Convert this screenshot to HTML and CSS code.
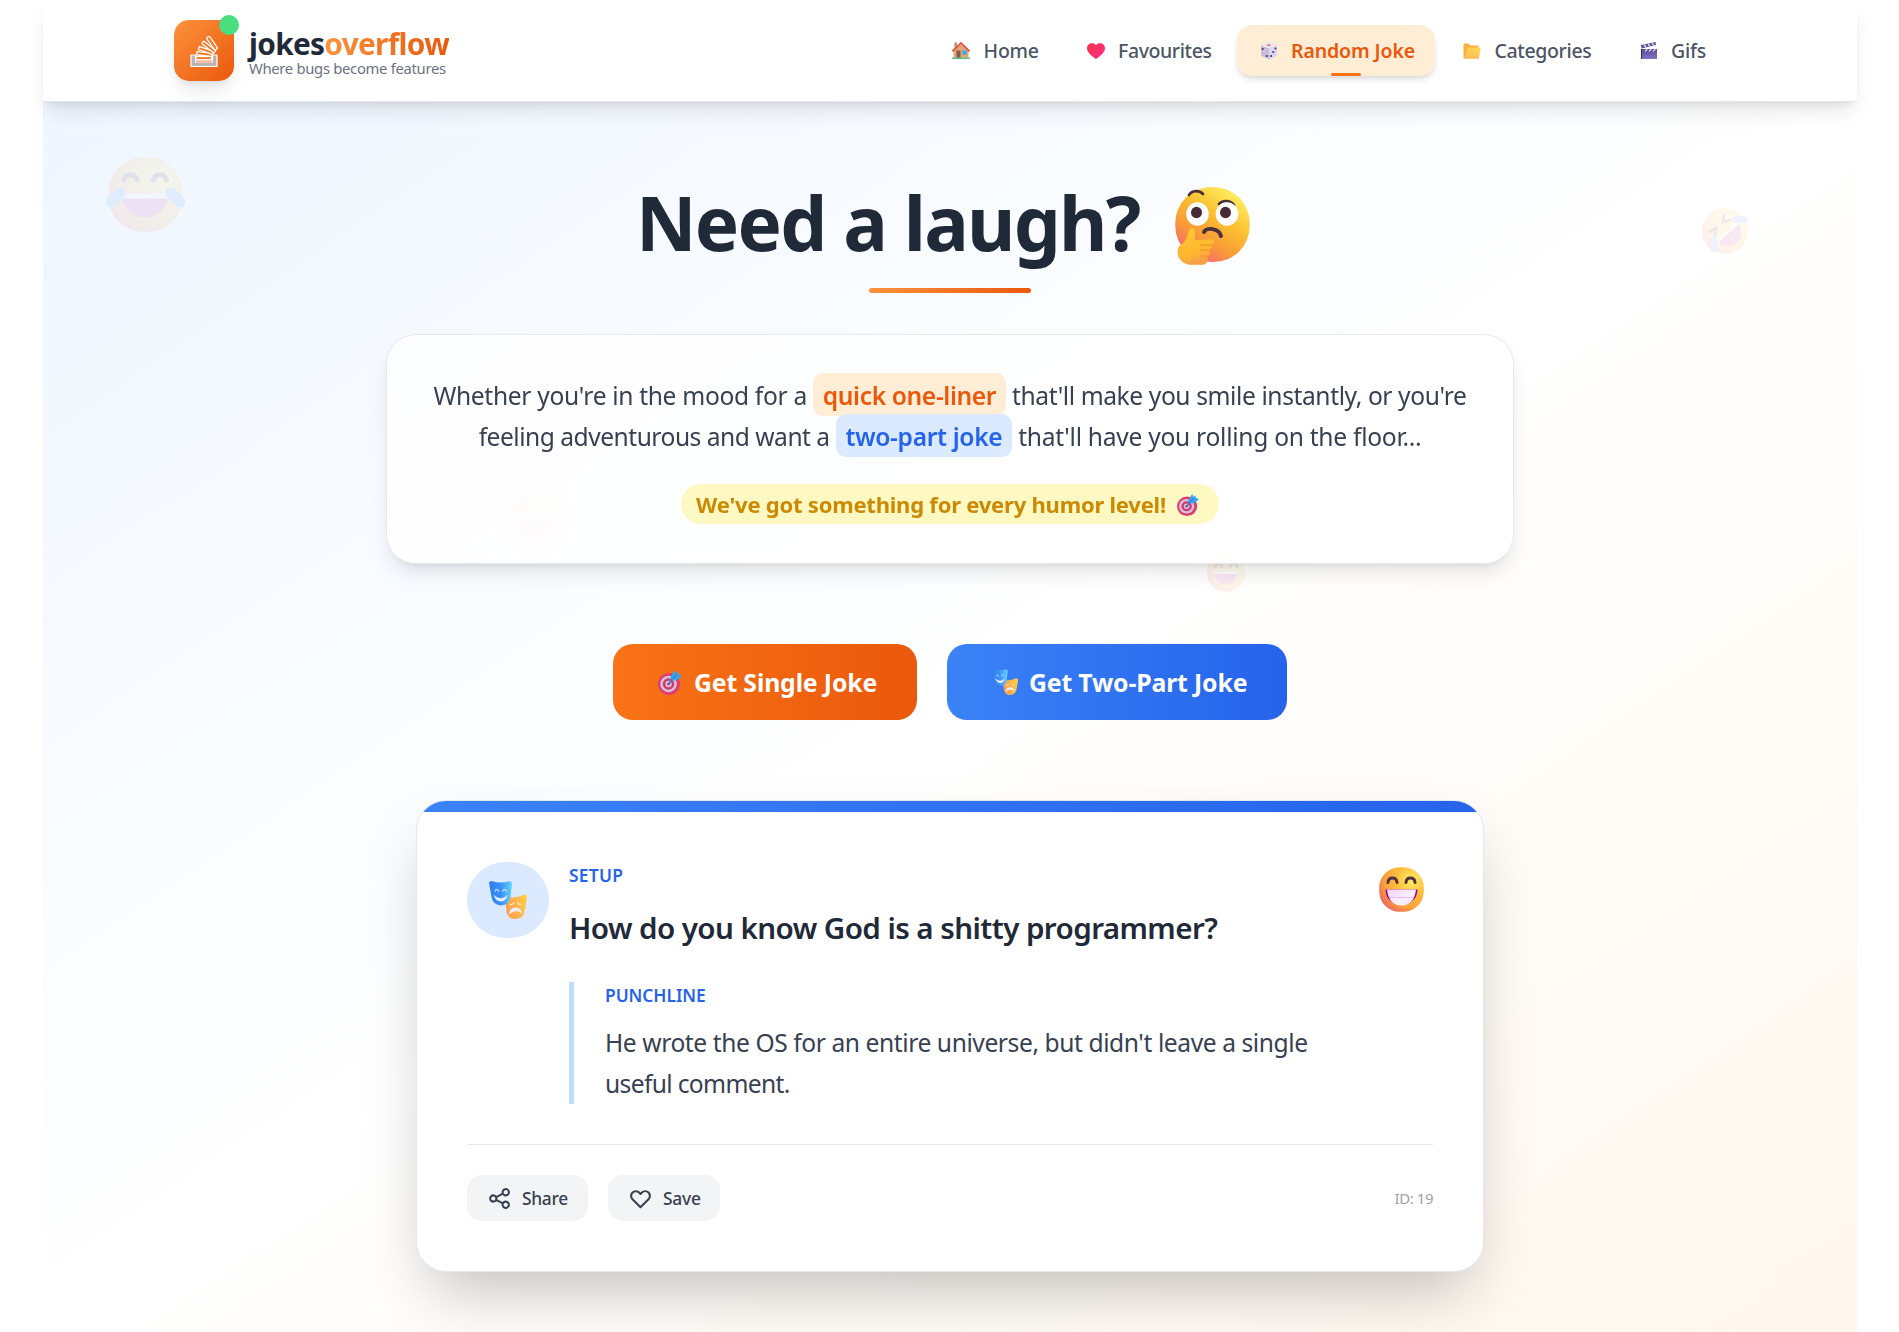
FILE: index.html
```html
<!DOCTYPE html>
<html lang="en">
<head>
<meta charset="utf-8">
<title>jokesoverflow</title>
<link rel="stylesheet" href="styles.css">
</head>
<body>
<svg class="sprite" aria-hidden="true">
  <defs>
    <radialGradient id="face" cx=".72" cy=".3" r=".8"><stop offset="0" stop-color="#fff06a"/><stop offset=".4" stop-color="#ffc23d"/><stop offset=".75" stop-color="#f9a23a"/><stop offset="1" stop-color="#ee6a5c"/></radialGradient>
    <linearGradient id="thinkFace" x1=".85" y1=".15" x2=".3" y2="1"><stop offset="0" stop-color="#ffe95c"/><stop offset=".35" stop-color="#fbc031"/><stop offset=".7" stop-color="#fa9838"/><stop offset="1" stop-color="#f4637c"/></linearGradient>
    <linearGradient id="hand" x1="0" y1="0" x2=".3" y2="1"><stop offset="0" stop-color="#ffcb35"/><stop offset=".75" stop-color="#ffb62d"/><stop offset="1" stop-color="#f6a04a"/></linearGradient>
    <linearGradient id="teeth" x1="0" y1="0" x2="1" y2="1"><stop offset="0" stop-color="#ead2ff"/><stop offset=".6" stop-color="#fbf1ff"/><stop offset="1" stop-color="#f0d8fb"/></linearGradient>
    <linearGradient id="heartFill" x1="0" y1="0" x2="1" y2="1"><stop offset="0" stop-color="#e8384f"/><stop offset=".5" stop-color="#ff2f68"/><stop offset="1" stop-color="#f52a9a"/></linearGradient>
    <linearGradient id="blueMask" x1="0" y1="0" x2="1" y2="0"><stop offset="0" stop-color="#2f7fe9"/><stop offset=".5" stop-color="#3b90fb"/><stop offset="1" stop-color="#62d4ff"/></linearGradient>
    <linearGradient id="goldMask" x1="0" y1=".3" x2="1" y2="0"><stop offset="0" stop-color="#ff9d52"/><stop offset="1" stop-color="#ffd23f"/></linearGradient>
    <linearGradient id="folderFill" x1="0" y1="0" x2="0" y2="1"><stop offset="0" stop-color="#ffd54a"/><stop offset="1" stop-color="#ffbe5a"/></linearGradient>
    <linearGradient id="clapFill" x1="0" y1="0" x2="0" y2="1"><stop offset="0" stop-color="#5d4587"/><stop offset="1" stop-color="#7e76c9"/></linearGradient>
  </defs>
  <symbol id="i-think" viewBox="0 0 75 78" preserveAspectRatio="none">
    <rect x=".3" y="0" width="74.400" height="75" rx="36" fill="url(#thinkFace)"/>
    <path d="M14 8C17 3 24 3 28 7" fill="none" stroke="#4d303d" stroke-width="2.800" stroke-linecap="round"/>
    <path d="M44 17C48 13 55 13 59 18" fill="none" stroke="#4d303d" stroke-width="2.800" stroke-linecap="round"/>
    <ellipse cx="22.500" cy="27" rx="11.300" ry="11.800" fill="#fff"/><ellipse cx="52" cy="27" rx="11.300" ry="11.800" fill="#fff"/>
    <ellipse cx="21.500" cy="25.500" rx="5.500" ry="5.700" fill="#482a36"/><ellipse cx="50.500" cy="25.500" rx="5.500" ry="5.700" fill="#482a36"/>
    <path d="M29 45C31 40 44 41 46 49" fill="none" stroke="#4d303d" stroke-width="4" stroke-linecap="round"/>
    <path d="M14 43C16 39 21 41 20.500 46L20 53L37 52C41 53 40 58 36 58C38 60 37 63 34 63C36 66 35 69 32 69C34 73 32 77.500 27 77.500L16 77.500C8 77 3 72 3 65C3 59 6 58 9 55C12 51 12 48 14 43Z" fill="url(#hand)" stroke="#f3a02c" stroke-width=".6"/>
    <path d="M25 58L36 58M25 63L34 63M25 69L32 69" stroke="#ee8b2d" stroke-width="1.200" fill="none"/>
  </symbol>
  <symbol id="i-grin" viewBox="0 0 45 45">
    <rect x=".2" y=".2" width="44.600" height="44.600" rx="20.500" fill="url(#face)"/>
    <path d="M9 15.500C9.500 9.500 17.500 9.500 18 15.500M27 15.500C27.500 9.500 35.500 9.500 36 15.500" fill="none" stroke="#54303f" stroke-width="3" stroke-linecap="round"/>
    <path d="M6.500 22.500H38.500C38.500 43 6.500 43 6.500 22.500Z" fill="#9a0089"/>
    <path d="M8 22.500H37C36.500 27 35 31 34 32.500C29 40.500 16 40.500 11 32.500C9.500 29.500 8.500 27 8 22.500Z" fill="url(#teeth)"/>
    <path d="M10 30.500H35" stroke="#f0b8f2" stroke-width="1"/>
  </symbol>
  <symbol id="i-joy" viewBox="0 0 81 75">
    <rect x="3.500" y="0" width="74" height="75" rx="35" fill="url(#face)"/>
    <path d="M19 23C21 16 30 16 32 23M48.500 23C50.500 16 59.500 16 61.500 23" fill="none" stroke="#54303f" stroke-width="5" stroke-linecap="round"/>
    <path d="M17 38H63C62 68 18 68 17 38Z" fill="#d32aa8"/><path d="M17 37H63V41.500H17Z" fill="#fff"/>
    <path d="M6 45L15 36M75 45L66 36" stroke="#4f8dff" stroke-width="11" stroke-linecap="round"/>
  </symbol>
  <symbol id="i-rofl" viewBox="0 0 46 46">
    <ellipse cx="23" cy="23" rx="23" ry="23" fill="url(#face)"/>
    <path d="M22 7L21 14L28 12M7 24L14 20L13 28" fill="none" stroke="#54303f" stroke-width="2.600" stroke-linecap="round"/>
    <path d="M36 15C46 30 30 46 15 34Z" fill="#d32aa8"/><path d="M36 15L15 34" stroke="#fff" stroke-width="2.500"/>
    <path d="M33 11.500H42M12 32V41" stroke="#4f8dff" stroke-width="6.500" stroke-linecap="round"/>
  </symbol>
  <symbol id="i-smile" viewBox="0 0 38 38">
    <circle cx="19" cy="19" r="19" fill="url(#face)"/>
    <path d="M8 13C9 8.500 14 8.500 15 13M23 13C24 8.500 29 8.500 30 13" fill="none" stroke="#54303f" stroke-width="2.600" stroke-linecap="round"/>
    <path d="M7.500 18.500H30.500C30 34 8 34 7.500 18.500Z" fill="#d32aa8"/><path d="M7.500 17.500H30.500V20H7.500Z" fill="#fff"/>
  </symbol>
  <symbol id="i-target" viewBox="0 0 24 26" preserveAspectRatio="none">
    <circle cx="11" cy="15" r="11" fill="#e13b70"/><circle cx="10.500" cy="15" r="8.300" fill="#cfc4dc"/><circle cx="10.500" cy="15" r="5.700" fill="#d8356c"/><circle cx="10.500" cy="15" r="3.200" fill="#cfc4dc"/><circle cx="10.500" cy="15" r="1.300" fill="#b02c5a"/>
    <path d="M10.500 15L16 9" stroke="#2d6fc0" stroke-width="1.300"/>
    <path d="M12.500 8.500L16.500 1L18 4.500L20 2.500L20.500 5.500L24 7L18.500 11.500H12.500Z" fill="#35a4ee"/><path d="M13 11L19 5.500" stroke="#2477cc" stroke-width="1"/>
  </symbol>
  <symbol id="i-masks" viewBox="0 0 38 38">
    <path d="M16 15C20 17 29 17 34 14Q38 12 38 17L35.500 31Q34 38 26 38Q19 38 17.500 31Z" fill="url(#goldMask)"/>
    <path d="M0 2Q0 0 3 0Q11 3 20 .2Q23 0 23 3L21.500 16Q20 24.500 12 24.500Q4 24 2.500 16Z" fill="url(#blueMask)"/>
    <path d="M5.800 10.500Q7.500 6.500 10 10.500M13.500 10.500Q15.500 6.500 17.700 10.500" fill="none" stroke="#dbeafe" stroke-width="1.100"/>
    <path d="M4.500 13.500Q12 21 18.700 13.500Q17 20.500 12 20.500Q6.500 20.500 4.500 13.500Z" fill="#e5efff"/>
    <path d="M20.500 23.500Q24 24 25 21.500M28.500 21.500Q29.500 24 32.500 23" fill="none" stroke="#ffedcf" stroke-width="1.200"/>
    <path d="M20 33.500Q20.500 26.500 26.500 26.500Q32 26.500 33 32.500Q27 27 20 33.500Z" fill="#e8efff"/>
  </symbol>
  <symbol id="i-house" viewBox="0 0 18 17">
    <path d="M1.500 9L9 2L16.500 9V16H1.500Z" fill="#dfa877"/><path d="M2.500 .5H5V6H2.500Z" fill="#c08a6a"/>
    <path d="M.5 9.300L9 1L17.500 9.300" fill="none" stroke="#e2503f" stroke-width="1.700"/><path d="M4.500 8.500H8.500V16H4.500Z" fill="#8a5850"/><path d="M10.500 8.500H14.500V12.500H10.500Z" fill="#35a9ee"/><path d="M0 15.500H18V17H0Z" fill="#5cc48a"/>
  </symbol>
  <symbol id="i-heart" viewBox="0 0 18 16"><path d="M9 2.200C12-1.500 18 .2 18 5.300C18 9.500 13 13.500 9 16C5 13.500 0 9.500 0 5.300C0 .2 6-1.500 9 2.200Z" fill="url(#heartFill)"/></symbol>
  <symbol id="i-dice" viewBox="0 0 18 18">
    <path d="M1 3.500L8.500 .5L17 3.500V13.500L9 17.500L1 13.500Z" fill="#c6bdd6"/><path d="M1 3.500L8.500 .5L17 3.500L9 6.500Z" fill="#eeeaf2"/><path d="M9 6.500L17 3.500V13.500L9 17.500Z" fill="#dcd7ea"/>
    <ellipse cx="8.800" cy="3.300" rx="2" ry="1" fill="#f06a72"/><g fill="#4d3592"><circle cx="2.700" cy="7" r="1.100"/><circle cx="6.800" cy="14" r="1.100"/><circle cx="15.500" cy="6.500" r="1.100"/><circle cx="13.200" cy="10" r="1.100"/><circle cx="11" cy="14" r="1.100"/></g>
  </symbol>
  <symbol id="i-folder" viewBox="0 0 17 16"><path d="M0 1.500Q0 .5 1 .5H5L7 2.500H14Q15 2.500 15 4V15.500H0Z" fill="#f6b23d"/><path d="M4 5.500Q4.300 4.500 5.500 4.500H16Q17.200 4.500 17 6L15.500 14.500Q15.300 15.500 14 15.500H0Q1.500 15 2 13Z" fill="url(#folderFill)"/></symbol>
  <symbol id="i-clap" viewBox="0 0 16 17">
    <path d="M.5 7H16V17H.5Z" fill="url(#clapFill)"/><path d="M0 3L14.500 0L15 3L.5 6.500Z" fill="#65508f"/><path d="M3 2.500L5 5.300M7 1.700L9 4.500M11 .900L13 3.600" stroke="#e6dff5" stroke-width="1.300"/><path d="M4 9.500L6.500 7M8 9.500L10.500 7M12 9.500L14.500 7" stroke="#d8d0ee" stroke-width="1.300"/><path d="M.5 7V17" stroke="#3d2b5e"/>
  </symbol>
</svg>

<div class="page">
  <header class="header">
    <div class="brand">
      <div class="logo">
        <svg width="28" height="34" viewBox="0 0 28 34">
          <path d="M1 21V32.500H27V21H22.500V28H5.500V21Z" fill="#b9b4b3" stroke="#fff" stroke-width="1.200"/>
          <path d="M6.500 27H22" stroke="#ffb494" stroke-width="3"/>
          <g fill="#f47a26" stroke="#fff" stroke-width="1.250">
            <rect x="6" y="22.500" width="15.500" height="3.200"/>
            <rect x="6" y="22.500" width="15.500" height="3.200" transform="translate(.8 -4) rotate(6 14 24)"/>
            <rect x="6" y="22.500" width="15.500" height="3.200" rx=".6" transform="translate(2.300 -7.500) rotate(20 14 24)"/>
            <rect x="6" y="22.500" width="15.500" height="3.200" rx=".8" transform="translate(5 -11) rotate(38 14 24)"/>
            <rect x="6" y="22.500" width="15" height="3.600" rx="1.200" transform="translate(8.600 -14.600) rotate(55 14 24)"/>
          </g>
        </svg>
        <span class="dot"></span>
      </div>
      <div class="brand-text">
        <div class="name">jokes<span>overflow</span></div>
        <div class="tagline">Where bugs become features</div>
      </div>
    </div>
    <nav class="nav">
      <a class="home"><svg width="18" height="17"><use href="#i-house"/></svg>Home</a>
      <a class="fav"><svg width="18" height="16"><use href="#i-heart"/></svg>Favourites</a>
      <a class="random active"><svg width="18" height="18"><use href="#i-dice"/></svg>Random Joke</a>
      <a class="cat"><svg width="18" height="16"><use href="#i-folder"/></svg>Categories</a>
      <a class="gifs"><svg width="18" height="17"><use href="#i-clap"/></svg>Gifs</a>
    </nav>
  </header>

  <main class="main">
    <svg class="float joy"><use href="#i-joy"/></svg>
    <svg class="float rofl"><use href="#i-rofl"/></svg>
    <svg class="float smile-a"><use href="#i-smile"/></svg>
    <svg class="float smile-b"><use href="#i-smile"/></svg>

    <h1><span>Need a laugh?</span><svg width="75" height="78"><use href="#i-think"/></svg></h1>
    <div class="rule"></div>

    <section class="intro">
      <p><span class="l1a">Whether you're in the mood for a</span> <mark class="one">quick one-liner</mark> <span class="l1b">that'll make you smile instantly, or you're</span><br><span class="l2a">feeling adventurous and want a</span> <mark class="two">two-part joke</mark> <span class="l2b">that'll have you rolling on the floor...</span></p>
      <div class="level"><span>We've got something for every humor level!</span><svg width="22" height="23"><use href="#i-target"/></svg></div>
    </section>

    <div class="actions">
      <button class="single"><svg width="24" height="26"><use href="#i-target"/></svg><span>Get Single Joke</span></button>
      <button class="double"><svg width="26" height="26"><use href="#i-masks"/></svg><span>Get Two-Part Joke</span></button>
    </div>

    <article class="card">
      <div class="strip"></div>
      <div class="card-body">
        <div class="joke">
          <div class="badge"><svg width="38" height="38"><use href="#i-masks"/></svg></div>
          <div class="joke-text">
            <div class="label setup">SETUP</div>
            <h2>How do you know God is a shitty programmer?</h2>
            <div class="punch">
              <div class="label punchline">PUNCHLINE</div>
              <p><span class="p1">He wrote the OS for an entire universe, but didn't leave a single</span><br><span class="p2">useful comment.</span></p>
            </div>
          </div>
          <svg class="grin" width="45" height="45"><use href="#i-grin"/></svg>
        </div>
        <footer class="card-foot">
          <button class="share"><svg width="25" height="25" viewBox="0 0 24 24"><path d="M8.684 13.342C8.886 12.938 9 12.482 9 12c0-.482-.114-.938-.316-1.342m0 2.684a3 3 0 110-2.684m0 2.684l6.632 3.316m-6.632-6l6.632-3.316m0 0a3 3 0 105.367-2.684 3 3 0 00-5.367 2.684zm0 9.316a3 3 0 105.368 2.684 3 3 0 00-5.368-2.684z"/></svg><span>Share</span></button>
          <button class="save"><svg width="25" height="25" viewBox="0 0 24 24"><path d="M4.318 6.318a4.500 4.500 0 000 6.364L12 20.364l7.682-7.682a4.500 4.500 0 00-6.364-6.364L12 7.636l-1.318-1.318a4.500 4.500 0 00-6.364 0z"/></svg><span>Save</span></button>
          <span class="id">ID: 19</span>
        </footer>
      </div>
    </article>
  </main>
</div>
</body>
</html>
```
FILE: styles.css
```css
* { box-sizing: border-box; }
body { margin: 0; background: #fff; font-family: "Noto Sans", "Open Sans", sans-serif; color: #1f2937; overflow: hidden; }
h1, h2, p { margin: 0; }
button { border: 0; font-family: inherit; }
svg { flex: none; display: block; }
.sprite { position: absolute; width: 0; height: 0; }
.page { width: 1814px; margin-left: 43px; height: 1332px; display: flex; flex-direction: column; }

.header { position: relative; z-index: 2; height: 102px; flex: none; display: flex; justify-content: space-between; align-items: center; padding: 0 131px; background: #fff; border-bottom: 1px solid #e5e7eb; box-shadow: 0 12.6px 19px -3.8px rgba(0,0,0,.1), 0 5px 7.5px -5px rgba(0,0,0,.1); }
.brand { display: flex; align-items: center; gap: 15px; }
.logo { position: relative; width: 60px; height: 61px; border-radius: 15px; background: linear-gradient(135deg, #fb923c, #ea580c); display: flex; align-items: center; justify-content: center; box-shadow: 0 12.6px 19px -3.8px rgba(0,0,0,.1), 0 5px 7.5px -5px rgba(0,0,0,.1); }
.dot { position: absolute; top: -5px; right: -5px; width: 20px; height: 20px; border-radius: 50%; background: #4ade80; }
.brand-text { white-space: nowrap; padding-top: 5px; }
.name { font-size: 29.8px; line-height: 30px; font-weight: 700; letter-spacing: -.68px; }
.name span { background: linear-gradient(90deg, #fb923c, #ea580c); -webkit-background-clip: text; background-clip: text; color: transparent; }
.tagline { font-size: 14.8px; line-height: 18px; letter-spacing: -.3px; color: #6b7280; }
.nav { display: flex; gap: 5px; }
.nav a { position: relative; height: 51px; display: flex; align-items: center; gap: 13.5px; padding-left: 23px; border-radius: 15px; font-size: 19.5px; font-weight: 500; color: #4b5563; white-space: nowrap; }
.home { width: 129.5px; letter-spacing: -.2px; }
.fav { width: 168px; letter-spacing: -.4px; }
.random { width: 198.5px; letter-spacing: -.12px; }
.cat { width: 171.5px; letter-spacing: -.35px; }
.gifs { width: 109.5px; letter-spacing: -.2px; }
.nav .active { background: #ffedd5; color: #ea580c; font-weight: 600; box-shadow: 0 5px 7.5px -1px rgba(0,0,0,.1), 0 2.5px 5px -2.5px rgba(0,0,0,.1); }
.active::after { content: ""; position: absolute; left: 94px; bottom: 0; width: 30px; height: 3px; border-radius: 2px; background: #f97316; }

.main { position: relative; flex: 1; overflow: hidden; display: flex; flex-direction: column; align-items: center; padding-top: 80px; background: linear-gradient(to bottom right, #eff6ff, #fff, #fff7ed); }
.main > * { flex: none; }
.float { position: absolute; opacity: .1; }
.joy { left: 62px; top: 55px; width: 81px; height: 75px; }
.rofl { left: 1659px; top: 106px; width: 46px; height: 46px; }
.smile-a { left: 465px; top: 388px; width: 57px; height: 57px; }
.smile-b { left: 1164px; top: 452px; width: 38px; height: 38px; }
h1 { display: flex; align-items: center; gap: 35px; padding-right: 14.5px; height: 80px; font-size: 74.5px; line-height: 82px; font-weight: 700; letter-spacing: -1.75px; white-space: nowrap; }
h1 svg { margin-top: 7px; }
.rule { width: 162px; height: 5px; margin-top: 26px; border-radius: 3px; background: linear-gradient(90deg, #fb923c, #ea580c); }
.intro { position: relative; width: 1128px; height: 230px; margin-top: 41px; padding-top: 40px; border: 1px solid #e5e7eb; border-radius: 30px; background: rgba(255,255,255,.8); backdrop-filter: blur(5px); box-shadow: 0 12.6px 19px -3.8px rgba(0,0,0,.1), 0 5px 7.5px -5px rgba(0,0,0,.1); display: flex; flex-direction: column; align-items: center; }
.intro p { font-size: 24.6px; line-height: 41px; color: #374151; text-align: center; white-space: nowrap; }
.l1a { letter-spacing: -.33px; }
.l1b { letter-spacing: -.41px; }
.l2a { letter-spacing: -.5px; }
.l2b { letter-spacing: -.28px; }
mark { display: inline-block; height: 43px; line-height: 45px; margin: -2px 0 0; padding: 0 9.5px; border-radius: 10px; font-weight: 600; vertical-align: top; }
.one { background: #ffedd5; color: #ea580c; letter-spacing: -.38px; }
.two { background: #dbeafe; color: #2563eb; letter-spacing: -.35px; margin-bottom: -2px; }
.level { display: flex; align-items: center; gap: 11px; margin-top: 27px; height: 40px; padding: 0 20px 0 15px; border-radius: 20px; background: #fef9c3; color: #ca8a04; font-size: 22px; font-weight: 700; letter-spacing: -.22px; white-space: nowrap; }
.actions { display: flex; gap: 30px; margin-top: 80px; }
.actions button { height: 76px; border-radius: 20px; display: flex; align-items: center; gap: 12px; padding: 0 0 0 45px; color: #fff; font-size: 24.8px; font-weight: 700; letter-spacing: -.15px; white-space: nowrap; }
.actions .single { width: 304px; background: linear-gradient(90deg, #f97316, #ea580c); }
.actions .double { width: 340px; gap: 11px; background: linear-gradient(90deg, #3b82f6, #2563eb); }

.card { width: 1068px; height: 472px; margin-top: 80px; border: 1px solid #e5e7eb; border-radius: 30px; background: #fff; overflow: hidden; box-shadow: 0 31px 63px -15px rgba(0,0,0,.25); }
.strip { height: 11px; background: linear-gradient(90deg, #3b82f6, #2563eb); }
.card-body { padding: 50px 50px 0; }
.joke { display: flex; height: 242px; }
.badge { width: 82px; height: 76px; border-radius: 38px; background: #dbeafe; display: flex; align-items: center; justify-content: center; }
.joke-text { flex: 1; margin-left: 20px; padding-top: 1px; white-space: nowrap; }
.label { font-size: 17.4px; line-height: 25px; font-weight: 600; color: #2563eb; }
.setup { letter-spacing: .25px; }
.punchline { padding-top: 1px; margin-bottom: -1px; letter-spacing: -.05px; }
h2 { margin-top: 19px; font-size: 29.6px; line-height: 41px; font-weight: 600; letter-spacing: -.58px; }
.punch { margin-top: 34px; height: 122px; border-left: 5px solid #bfdbfe; padding-left: 31px; }
.punch p { margin-top: 15px; font-size: 24.6px; line-height: 41px; color: #374151; }
.p1 { letter-spacing: -.42px; }
.p2 { letter-spacing: -.65px; }
.grin { margin: 5px 9px 0 0; }
.card-foot { margin-top: 40px; padding-top: 30px; border-top: 1px solid #e5e7eb; display: flex; align-items: center; }
.card-foot button { height: 46px; border-radius: 15px; background: #f3f4f6; color: #374151; display: flex; align-items: center; gap: 10px; padding: 0 0 0 20px; font-size: 17.4px; font-weight: 500; }
.card-foot path { fill: none; stroke: #374151; stroke-width: 2; stroke-linecap: round; stroke-linejoin: round; }
.card-foot .share { width: 121px; margin-right: 20px; letter-spacing: -.3px; }
.card-foot .save { width: 112px; letter-spacing: -.2px; }
.id { margin-left: auto; font-size: 14.9px; letter-spacing: -.4px; color: #9ca3af; }
```
